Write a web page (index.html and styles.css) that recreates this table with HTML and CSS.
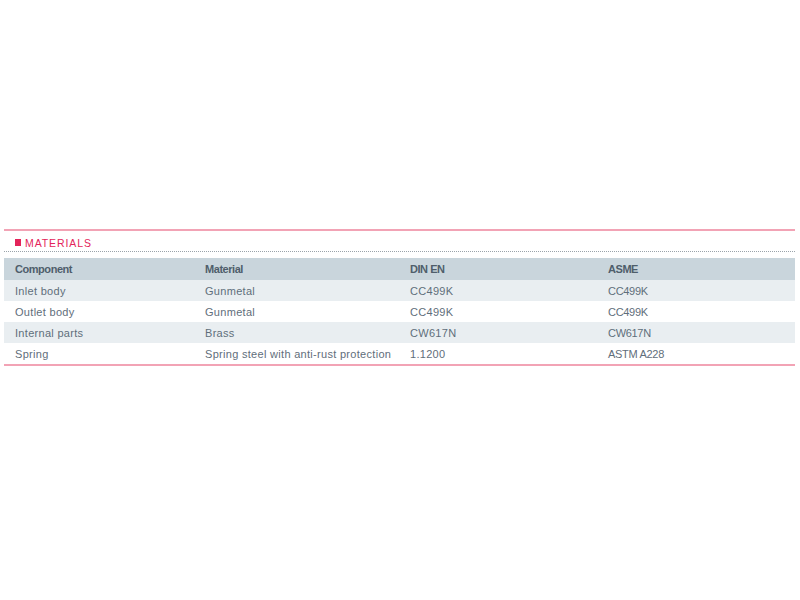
FILE: index.html
```html
<!DOCTYPE html>
<html>
<head>
<meta charset="utf-8">
<link rel="stylesheet" href="styles.css">
</head>
<body>
<section class="materials">
  <div class="title"><span class="square"></span>MATERIALS</div>
  <div class="table">
    <div class="row head">
      <div>Component</div><div>Material</div><div>DIN EN</div><div>ASME</div>
    </div>
    <div class="row alt">
      <div>Inlet body</div><div>Gunmetal</div><div>CC499K</div><div class="asme">CC499K</div>
    </div>
    <div class="row">
      <div>Outlet body</div><div>Gunmetal</div><div>CC499K</div><div class="asme">CC499K</div>
    </div>
    <div class="row alt">
      <div>Internal parts</div><div>Brass</div><div>CW617N</div><div class="asme">CW617N</div>
    </div>
    <div class="row">
      <div>Spring</div><div>Spring steel with anti-rust protection</div><div>1.1200</div><div class="asme">ASTM A228</div>
    </div>
  </div>
</section>
</body>
</html>
```
FILE: styles.css
```css
html, body {
  margin: 0;
  padding: 0;
  background: #ffffff;
}
body {
  padding-top: 229px;
  font-family: "Liberation Sans", Arial, sans-serif;
}
.materials {
  margin: 0 5px 0 4px;
  border-top: 2px solid #f2a3b5;
  border-bottom: 2px solid #f2a3b5;
}
.title {
  box-sizing: border-box;
  display: flex;
  align-items: center;
  height: 21px;
  padding-left: 11px;
  padding-top: 3px;
  font-size: 10.5px;
  letter-spacing: 0.9px;
  color: #e3245a;
  border-bottom: 1px dotted #9aa3aa;
}
.square {
  width: 6px;
  height: 7px;
  background: #e3245a;
  margin-right: 4px;
}
.table {
  margin-top: 6px;
}
.row {
  display: grid;
  grid-template-columns: 190px 205px 198px 198px;
  height: 21px;
  align-items: center;
  font-size: 11px;
  letter-spacing: 0.3px;
  color: #5f6e7b;
}
.row > div {
  padding-left: 11px;
  white-space: nowrap;
}
.row.head {
  background: #c9d5dc;
  font-weight: bold;
  height: 22px;
  font-size: 11px;
  color: #4f5e6b;
  letter-spacing: -0.45px;
}
.row.alt {
  background: #e9eef1;
}
.row .asme {
  letter-spacing: -0.3px;
}
```
